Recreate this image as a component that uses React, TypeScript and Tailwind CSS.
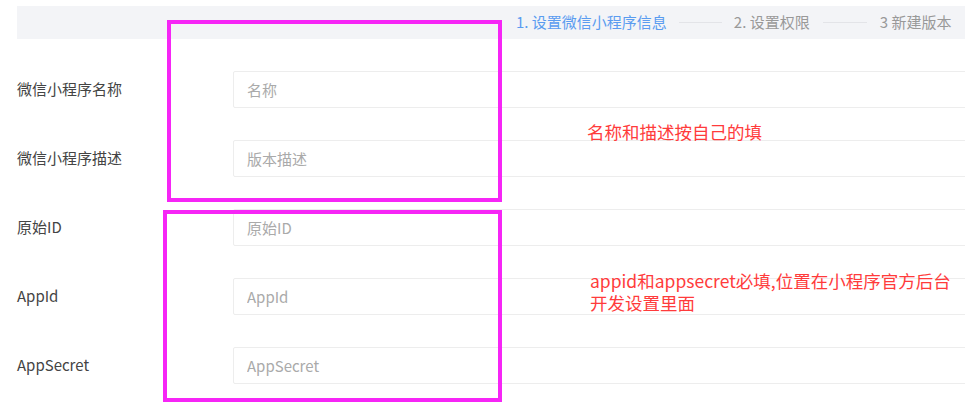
const font = "font-['Microsoft_YaHei','Noto_Sans_CJK_SC',sans-serif]"

const rows = [
  { label: '微信小程序名称', placeholder: '名称' },
  { label: '微信小程序描述', placeholder: '版本描述' },
  { label: '原始ID', placeholder: '原始ID' },
  { label: 'AppId', placeholder: 'AppId' },
  { label: 'AppSecret', placeholder: 'AppSecret' },
]

export default function App() {
  return (
    <div className={`relative h-[403px] w-[965px] overflow-hidden bg-white ${font}`}>
      <div className="pt-[6px] pl-[17px]">
        <div className="flex h-[33px] items-center bg-[#f3f4f7] pl-[499px] text-[15px]">
          <span className="text-[#5a9cf0]">1. 设置微信小程序信息</span>
          <span className="mx-[12px] h-px w-[43px] bg-[#e3e4e8]" />
          <span className="text-[#999]">2. 设置权限</span>
          <span className="mx-[13px] h-px w-[44px] bg-[#e3e4e8]" />
          <span className="text-[#999]">3 新建版本</span>
        </div>
      </div>

      <div className="mt-[32px] flex flex-col gap-[32px] pl-[17px]">
        {rows.map((r) => (
          <div key={r.label} className="flex items-center">
            <label className="w-[216px] shrink-0 text-[15px] text-[#444]">{r.label}</label>
            <input
              placeholder={r.placeholder}
              className="h-[37px] w-[760px] shrink-0 rounded-[2px] border border-[#ededed] px-[13px] text-[15px] outline-none placeholder:text-[#aaa]"
            />
          </div>
        ))}
      </div>

      <div className="absolute left-[167px] top-[20px] h-[182px] w-[335px] border-[4px] border-[#f625f6]" />
      <div className="absolute left-[163px] top-[210px] h-[192px] w-[339px] border-[4px] border-[#f625f6]" />

      <p className="absolute left-[587px] top-[120px] text-[17.5px] leading-[24px] text-[#ff3b3b]">
        名称和描述按自己的填
      </p>
      <div className="absolute left-[590px] top-[271px] flex w-[375px] flex-col text-[17.5px] leading-[20px] text-[#ff3b3b]">
        <span>appid和appsecret必填,位置在小程序官方后台</span>
        <span className="mt-[2px]">开发设置里面</span>
      </div>
    </div>
  )
}
